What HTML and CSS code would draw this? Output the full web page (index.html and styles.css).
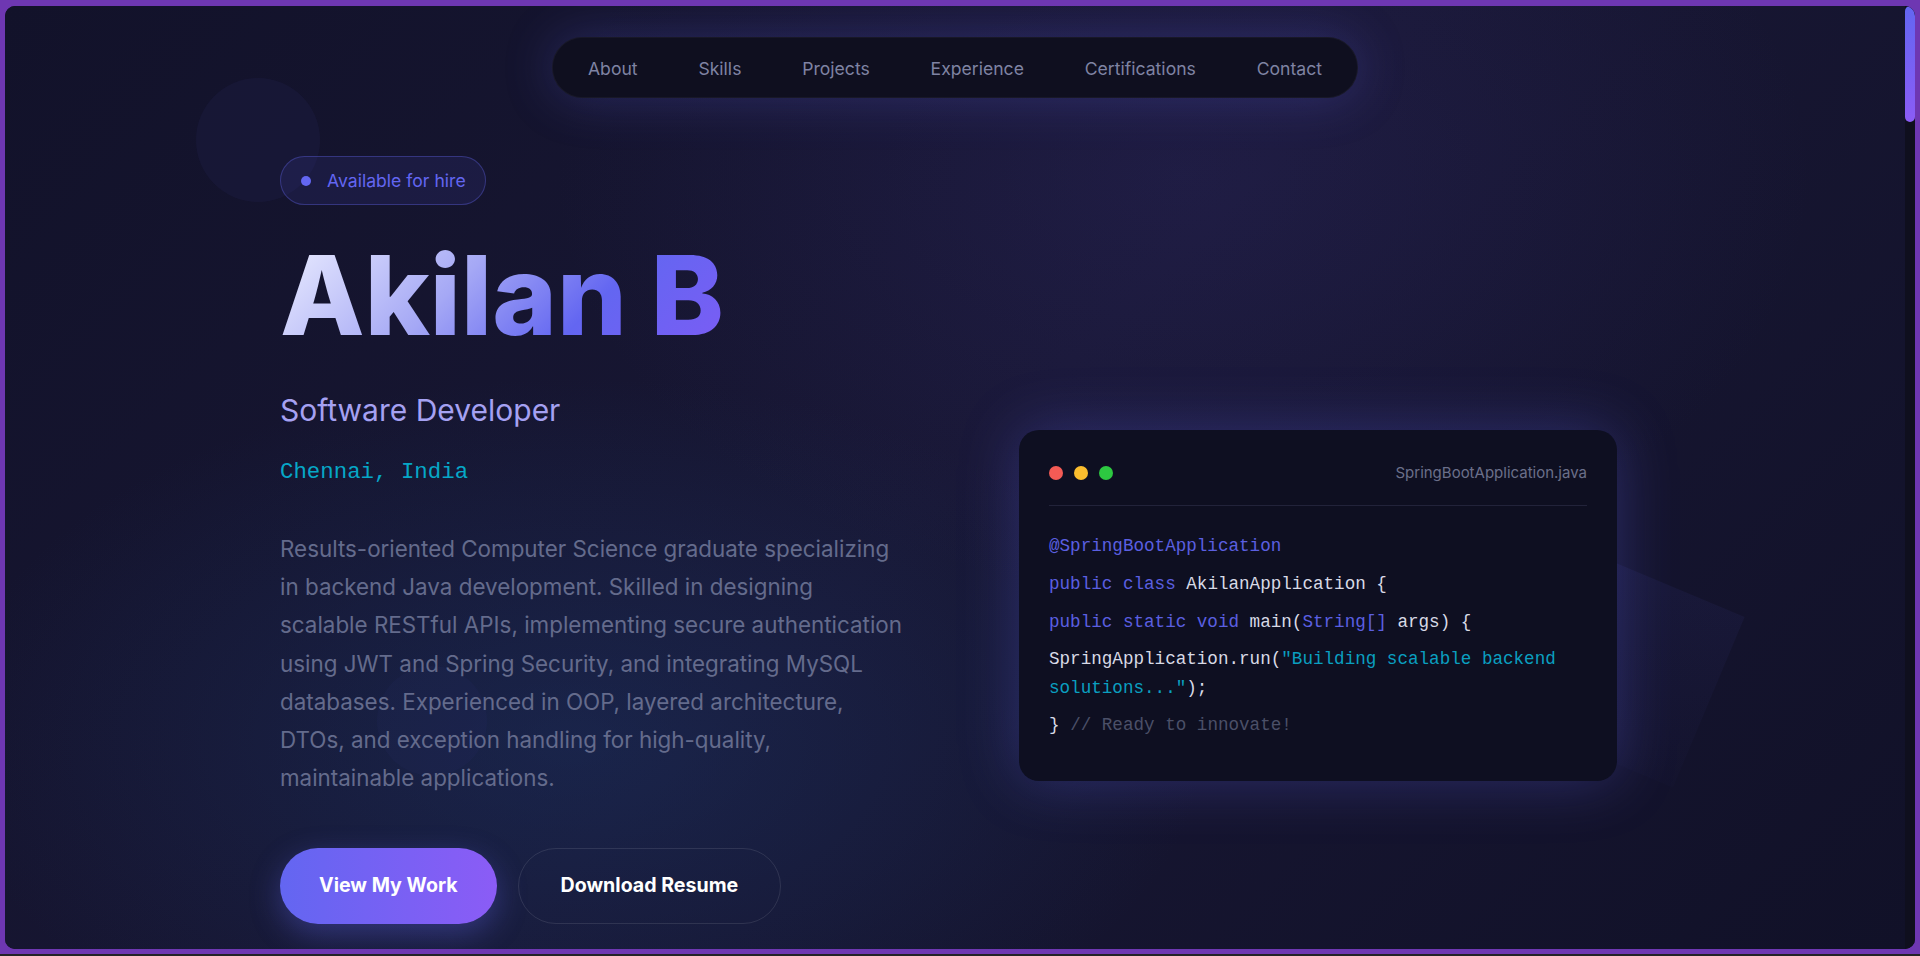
FILE: index.html
```html
<!DOCTYPE html>
<html lang="en">
<head>
<meta charset="utf-8">
<title>Akilan B — Software Developer</title>
<link rel="stylesheet" href="styles.css">
</head>
<body>
<div class="frame">
  <div class="page">
    <div class="deco deco-circle-a"></div>
    <div class="deco deco-circle-b"></div>
    <div class="deco deco-square"></div>

    <nav class="nav">
      <a href="#about">About</a>
      <a href="#skills">Skills</a>
      <a href="#projects">Projects</a>
      <a href="#experience">Experience</a>
      <a href="#certifications">Certifications</a>
      <a href="#contact">Contact</a>
    </nav>

    <section class="hero">
      <div class="hero-text">
        <div class="badge"><span class="badge-dot"></span>Available for hire</div>
        <h1 class="name">Akilan B</h1>
        <p class="role">Software Developer</p>
        <p class="location">Chennai, India</p>
        <p class="summary">Results-oriented Computer Science graduate specializing<br>
          in backend Java development. Skilled in designing<br>
          scalable RESTful APIs, implementing secure authentication<br>
          using JWT and Spring Security, and integrating MySQL<br>
          databases. Experienced in OOP, layered architecture,<br>
          DTOs, and exception handling for high-quality,<br>
          maintainable applications.</p>
        <div class="actions">
          <a class="btn btn-primary" href="#projects">View My Work</a>
          <a class="btn btn-outline" href="#resume">Download Resume</a>
        </div>
      </div>

      <div class="code-card">
        <div class="code-head">
          <div class="dots"><span class="dot-red"></span><span class="dot-yellow"></span><span class="dot-green"></span></div>
          <span class="file">SpringBootApplication.java</span>
        </div>
        <div class="code">
          <div class="line"><span class="kw">@SpringBootApplication</span></div>
          <div class="line"><span class="kw">public class</span> AkilanApplication {</div>
          <div class="line"><span class="kw">public static void</span> main(<span class="kw">String[]</span> args) {</div>
          <div class="line">SpringApplication.run(<span class="str">"Building scalable backend solutions..."</span>);</div>
          <div class="line">} <span class="cm">// Ready to innovate!</span></div>
        </div>
      </div>
    </section>
  </div>
  <div class="scrollbar"><div class="scrollbar-thumb"></div></div>
</div>
</body>
</html>
```

FILE: styles.css
```css
* {
  box-sizing: border-box;
}

html, body {
  height: 100%;
}

body {
  margin: 0;
  padding: 6px 5px 5px;
  background: #6e37b2;
  border-bottom: 2px solid #232327;
  overflow: hidden;
  font-family: Inter, "Noto Sans", sans-serif;
}

.frame {
  display: flex;
  height: 100%;
  border-radius: 10px;
  overflow: hidden;
  background: #0f0f1e;
}

.page {
  position: relative;
  flex: 1;
  min-width: 0;
  padding-top: 31px;
  overflow: hidden;
  background:
    radial-gradient(ellipse 900px 520px at 30% 78%, rgba(28, 58, 112, 0.38), transparent 70%),
    radial-gradient(ellipse 900px 600px at 62% 18%, rgba(62, 52, 135, 0.2), transparent 70%),
    linear-gradient(135deg, #12122a 0%, #181734 50%, #111128 100%);
}

/* scrollbar */
.scrollbar {
  flex: 0 0 10px;
  background: #0f0f1e;
}

.scrollbar-thumb {
  height: 116px;
  border-radius: 5px;
  background: linear-gradient(180deg, #6366f1, #8b5cf6);
}

/* decorative background shapes */
.deco {
  position: absolute;
  pointer-events: none;
}

.deco-circle-a {
  left: 191px;
  top: 72px;
  width: 124px;
  height: 124px;
  border-radius: 50%;
  background: rgba(99, 102, 241, 0.05);
}

.deco-circle-b {
  left: 372px;
  top: 660px;
  width: 110px;
  height: 110px;
  border-radius: 50%;
  background: rgba(99, 102, 241, 0.03);
}

.deco-square {
  left: 1526px;
  top: 568px;
  width: 185px;
  height: 185px;
  transform: rotate(22.8deg);
  background: linear-gradient(160deg, rgba(99, 102, 241, 0.07), rgba(99, 102, 241, 0.01));
}

/* navigation */
.nav {
  position: relative;
  display: flex;
  gap: 60.8px;
  width: max-content;
  margin: 0 auto;
  padding: 19.5px 35px 18.5px;
  border-radius: 40px;
  background: #0f0f1f;
  border: 1px solid rgba(255, 255, 255, 0.04);
  box-shadow: 0 0 50px rgba(99, 102, 241, 0.25);
}

.nav a {
  color: #7f83a3;
  font-size: 17.6px;
  line-height: 1.21;
  text-decoration: none;
}

/* hero */
.hero {
  position: relative;
  display: flex;
  justify-content: space-between;
  align-items: flex-start;
  padding: 58px 288px 0 275px;
}

.hero-text {
  width: 660px;
}

.badge {
  display: flex;
  align-items: center;
  gap: 16px;
  width: fit-content;
  padding: 13px 19px 13px 20px;
  border: 1px solid rgba(99, 102, 241, 0.35);
  background: rgba(99, 102, 241, 0.1);
  border-radius: 30px;
  color: #6366f1;
  font-size: 17.6px;
  line-height: 1.2;
}

.badge-dot {
  width: 10px;
  height: 10px;
  border-radius: 50%;
  background: #6366f1;
}

.name {
  margin: 30px 0 0;
  width: fit-content;
  font-size: 110px;
  font-weight: 800;
  line-height: 1.1;
  background: linear-gradient(135deg, #eef0ff 0%, #a5a8f5 40%, #6366f1 68%, #7c5cf5 100%);
  -webkit-background-clip: text;
  background-clip: text;
  color: transparent;
}

.role {
  margin: 36px 0 0;
  font-size: 30px;
  line-height: 1.2;
  color: #a5a1f2;
}

.location {
  margin: 31px 0 0;
  font-family: "Liberation Mono", monospace;
  font-size: 22.4px;
  line-height: 1.2;
  color: #06a7c7;
}

.summary {
  margin: 44px 0 0;
  font-size: 22.4px;
  line-height: 1.7;
  color: #646b8c;
}

.actions {
  display: flex;
  gap: 21px;
  margin-top: 51px;
}

.btn {
  border-radius: 40px;
  font-size: 19.6px;
  font-weight: 700;
  line-height: 1.2;
  color: #ffffff;
  text-decoration: none;
}

.btn-primary {
  padding: 26.5px 39px;
  background: linear-gradient(90deg, #6366f1, #8b5cf6);
  box-shadow: 0 10px 30px rgba(99, 102, 241, 0.35);
}

.btn-outline {
  padding: 25.5px 42px;
  border: 1px solid rgba(255, 255, 255, 0.1);
}

/* code card */
.code-card {
  width: 598px;
  margin-top: 274px;
  padding: 32px 30px;
  border-radius: 20px;
  background: #0e0f21;
  box-shadow: 0 0 60px rgba(99, 102, 241, 0.3);
}

.code-head {
  display: flex;
  justify-content: space-between;
  align-items: center;
  height: 44px;
  padding-bottom: 22px;
  border-bottom: 1px solid #22233a;
  margin-bottom: 26px;
}

.dots {
  display: flex;
  gap: 11px;
}

.dots span {
  width: 14px;
  height: 14px;
  border-radius: 50%;
}

.dot-red { background: #f45b55; }
.dot-yellow { background: #fbbd2e; }
.dot-green { background: #2dc841; }

.file {
  font-size: 15px;
  color: #6b6f8a;
}

.code {
  font-family: "Liberation Mono", monospace;
  font-size: 17.6px;
  line-height: 1.6;
  color: #d8dae6;
}

.line {
  margin-bottom: 9.6px;
}

.kw { color: #5b5fe0; }
.str { color: #0a9fc0; }
.cm { color: #4b5068; }
```
